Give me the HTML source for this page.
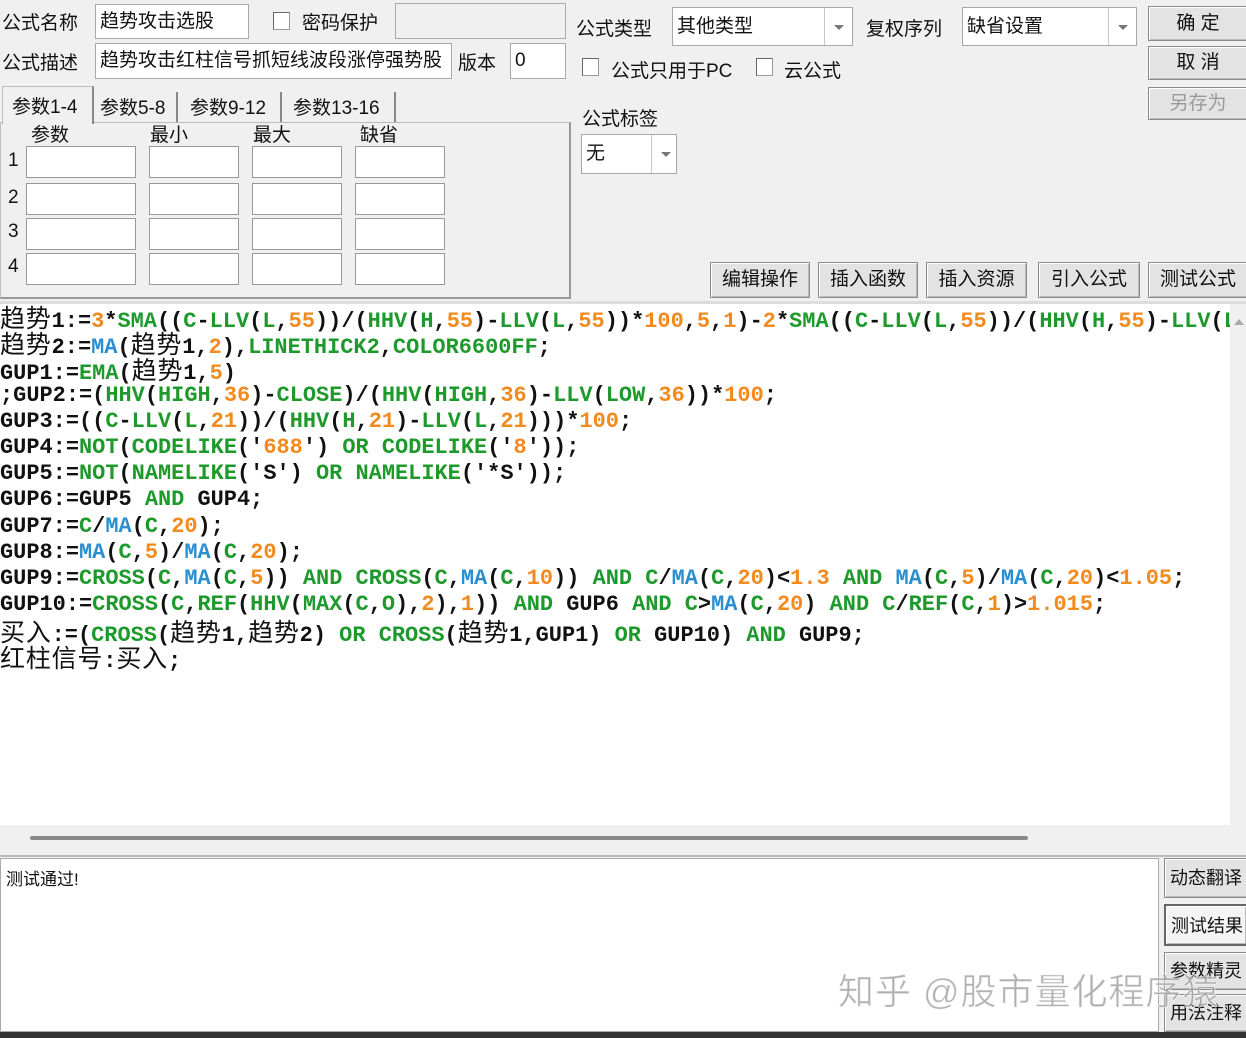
<!DOCTYPE html>
<html><head><meta charset="utf-8"><style>
*{margin:0;padding:0;box-sizing:border-box}
body{width:1246px;height:1038px;background:#f0f0f0;position:relative;overflow:hidden;font-family:"Liberation Sans","Noto Sans CJK SC",sans-serif;color:#111}
.a{position:absolute}
.lbl{position:absolute;font-size:19px;white-space:nowrap}
.in{position:absolute;background:#fff;border:1px solid #a8a8a8;font-size:19px;padding-left:4px;white-space:nowrap;overflow:hidden}
.cb{position:absolute;width:17px;height:18px;background:#fff;border:1px solid #999;border-top-color:#666;border-left-color:#666}
.btn{position:absolute;background:#e3e3e3;border:1px solid #8a8a8a;box-shadow:inset 1px 1px 0 #fff,inset -1px -1px 0 #bbb;font-size:19px;text-align:center;white-space:nowrap}
.arr{position:absolute;top:0;right:0;bottom:0;width:28px;border-left:1px solid #c8c8c8}
.arr:after{content:"";position:absolute;left:9px;top:50%;margin-top:-2px;border:5px solid transparent;border-top:5px solid #777}
#code{position:absolute;left:0;top:304px;width:1230px;height:521px;background:#fff;overflow:hidden}
#code div{height:26.2px;line-height:26px;font-family:"Liberation Mono",monospace;font-weight:bold;font-size:21.95px;white-space:pre;color:#111}
.g{color:#1e9a2c}.b{color:#2a8fd0}.o{color:#f28a1e}
.z{font-family:"Noto Sans CJK SC",sans-serif;font-weight:normal;font-size:25px;letter-spacing:0.8px}
.pn{position:absolute;font-size:19px}
</style></head><body>
<div class="lbl" style="left:2px;top:8px">公式名称</div>
<div class="in" style="left:95px;top:4px;width:154px;height:35px;line-height:33px">趋势攻击选股</div>
<div class="cb" style="left:273px;top:12px"></div>
<div class="lbl" style="left:302px;top:8px">密码保护</div>
<div class="a" style="left:395px;top:3px;width:171px;height:36px;border:1px solid #aaa;background:#f0f0f0"></div>
<div class="lbl" style="left:2px;top:48px">公式描述</div>
<div class="in" style="left:95px;top:43px;width:357px;height:36px;line-height:34px">趋势攻击红柱信号抓短线波段涨停强势股</div>
<div class="lbl" style="left:458px;top:48px">版本</div>
<div class="in" style="left:510px;top:43px;width:56px;height:36px;line-height:34px">0</div>

<div class="a" style="left:0;top:122px;width:571px;height:177px;border:1px solid #bbb;border-right:2px solid #999;border-bottom:2px solid #999"></div>
<div class="a" style="left:2px;top:86px;width:92px;height:38px;background:#f0f0f0;border:1px solid #bbb;border-bottom:none;border-right:2px solid #888;font-size:19px;padding:5px 0 0 9px">参数1-4</div>
<div class="a" style="left:96px;top:92px;width:82px;height:30px;border-right:2px solid #888;font-size:19px;padding:1px 0 0 4px">参数5-8</div>
<div class="a" style="left:182px;top:92px;width:100px;height:30px;border-right:2px solid #888;font-size:19px;padding:1px 0 0 8px">参数9-12</div>
<div class="a" style="left:286px;top:92px;width:110px;height:30px;border-right:2px solid #888;font-size:19px;padding:1px 0 0 7px">参数13-16</div>
<div class="pn" style="left:31px;top:120px">参数</div>
<div class="pn" style="left:150px;top:120px">最小</div>
<div class="pn" style="left:253px;top:120px">最大</div>
<div class="pn" style="left:360px;top:120px">缺省</div>
<div class="pn" style="left:8px;top:150px">1</div>
<div class="pn" style="left:8px;top:187px">2</div>
<div class="pn" style="left:8px;top:221px">3</div>
<div class="pn" style="left:8px;top:256px">4</div>
<div id="grid"></div>

<div class="lbl" style="left:576px;top:14px">公式类型</div>
<div class="in" style="left:672px;top:7px;width:181px;height:39px;line-height:37px">其他类型<div class="arr"></div></div>
<div class="lbl" style="left:866px;top:14px">复权序列</div>
<div class="in" style="left:962px;top:7px;width:175px;height:39px;line-height:37px">缺省设置<div class="arr"></div></div>
<div class="btn" style="left:1148px;top:6px;width:100px;height:35px;line-height:33px">确 定</div>
<div class="btn" style="left:1148px;top:46px;width:100px;height:34px;line-height:32px">取 消</div>
<div class="btn" style="left:1148px;top:87px;width:100px;height:33px;line-height:31px;color:#999">另存为</div>
<div class="cb" style="left:582px;top:58px"></div>
<div class="lbl" style="left:611px;top:56px">公式只用于PC</div>
<div class="cb" style="left:756px;top:58px"></div>
<div class="lbl" style="left:784px;top:56px">云公式</div>
<div class="lbl" style="left:582px;top:104px">公式标签</div>
<div class="in" style="left:581px;top:134px;width:96px;height:40px;line-height:38px">无<div class="arr" style="width:25px"></div></div>
<div class="btn" style="left:710px;top:262px;width:100px;height:36px;line-height:34px">编辑操作</div>
<div class="btn" style="left:818px;top:262px;width:100px;height:36px;line-height:34px">插入函数</div>
<div class="btn" style="left:926px;top:262px;width:101px;height:36px;line-height:34px">插入资源</div>
<div class="btn" style="left:1038px;top:262px;width:102px;height:36px;line-height:34px">引入公式</div>
<div class="btn" style="left:1148px;top:262px;width:100px;height:36px;line-height:34px">测试公式</div>

<div class="a" style="left:0;top:301px;width:1246px;height:3px;background:#ddd"></div>
<div id="code">
<div><span class="z">趋势</span>1:=<span class="o">3</span>*<span class="g">SMA</span>((<span class="g">C</span>-<span class="g">LLV</span>(<span class="g">L</span>,<span class="o">55</span>))/(<span class="g">HHV</span>(<span class="g">H</span>,<span class="o">55</span>)-<span class="g">LLV</span>(<span class="g">L</span>,<span class="o">55</span>))*<span class="o">100</span>,<span class="o">5</span>,<span class="o">1</span>)-<span class="o">2</span>*<span class="g">SMA</span>((<span class="g">C</span>-<span class="g">LLV</span>(<span class="g">L</span>,<span class="o">55</span>))/(<span class="g">HHV</span>(<span class="g">H</span>,<span class="o">55</span>)-<span class="g">LLV</span>(<span class="g">L</span></div>
<div><span class="z">趋势</span>2:=<span class="b">MA</span>(<span class="z">趋势</span>1,<span class="o">2</span>),<span class="g">LINETHICK2</span>,<span class="g">COLOR6600FF</span>;</div>
<div>GUP1:=<span class="g">EMA</span>(<span class="z">趋势</span>1,<span class="o">5</span>)</div>
<div>;GUP2:=(<span class="g">HHV</span>(<span class="g">HIGH</span>,<span class="o">36</span>)-<span class="g">CLOSE</span>)/(<span class="g">HHV</span>(<span class="g">HIGH</span>,<span class="o">36</span>)-<span class="g">LLV</span>(<span class="g">LOW</span>,<span class="o">36</span>))*<span class="o">100</span>;</div>
<div>GUP3:=((<span class="g">C</span>-<span class="g">LLV</span>(<span class="g">L</span>,<span class="o">21</span>))/(<span class="g">HHV</span>(<span class="g">H</span>,<span class="o">21</span>)-<span class="g">LLV</span>(<span class="g">L</span>,<span class="o">21</span>)))*<span class="o">100</span>;</div>
<div>GUP4:=<span class="g">NOT</span>(<span class="g">CODELIKE</span>('<span class="o">688</span>') <span class="g">OR</span> <span class="g">CODELIKE</span>('<span class="o">8</span>'));</div>
<div>GUP5:=<span class="g">NOT</span>(<span class="g">NAMELIKE</span>('S') <span class="g">OR</span> <span class="g">NAMELIKE</span>('*S'));</div>
<div>GUP6:=GUP5 <span class="g">AND</span> GUP4;</div>
<div>GUP7:=<span class="g">C</span>/<span class="b">MA</span>(<span class="g">C</span>,<span class="o">20</span>);</div>
<div>GUP8:=<span class="b">MA</span>(<span class="g">C</span>,<span class="o">5</span>)/<span class="b">MA</span>(<span class="g">C</span>,<span class="o">20</span>);</div>
<div>GUP9:=<span class="g">CROSS</span>(<span class="g">C</span>,<span class="b">MA</span>(<span class="g">C</span>,<span class="o">5</span>)) <span class="g">AND</span> <span class="g">CROSS</span>(<span class="g">C</span>,<span class="b">MA</span>(<span class="g">C</span>,<span class="o">10</span>)) <span class="g">AND</span> <span class="g">C</span>/<span class="b">MA</span>(<span class="g">C</span>,<span class="o">20</span>)&lt;<span class="o">1.3</span> <span class="g">AND</span> <span class="b">MA</span>(<span class="g">C</span>,<span class="o">5</span>)/<span class="b">MA</span>(<span class="g">C</span>,<span class="o">20</span>)&lt;<span class="o">1.05</span>;</div>
<div>GUP10:=<span class="g">CROSS</span>(<span class="g">C</span>,<span class="g">REF</span>(<span class="g">HHV</span>(<span class="g">MAX</span>(<span class="g">C</span>,<span class="g">O</span>),<span class="o">2</span>),<span class="o">1</span>)) <span class="g">AND</span> GUP6 <span class="g">AND</span> <span class="g">C</span>&gt;<span class="b">MA</span>(<span class="g">C</span>,<span class="o">20</span>) <span class="g">AND</span> <span class="g">C</span>/<span class="g">REF</span>(<span class="g">C</span>,<span class="o">1</span>)&gt;<span class="o">1.015</span>;</div>
<div><span class="z">买入</span>:=(<span class="g">CROSS</span>(<span class="z">趋势</span>1,<span class="z">趋势</span>2) <span class="g">OR</span> <span class="g">CROSS</span>(<span class="z">趋势</span>1,GUP1) <span class="g">OR</span> GUP10) <span class="g">AND</span> GUP9;</div>
<div><span class="z">红柱信号</span>:<span class="z">买入</span>;</div>
</div>
<div class="a" style="left:1230px;top:304px;width:16px;height:521px;background:#f0f0f0"></div>
<div class="a" style="left:1234px;top:314px;border:5px solid transparent;border-bottom:6px solid #aaa"></div>
<div class="a" style="left:0;top:825px;width:1246px;height:30px;background:#f0f0f0"></div>
<div class="a" style="left:30px;top:836px;width:998px;height:4px;background:#888;border-radius:2px"></div>
<div class="a" style="left:0;top:855px;width:1246px;height:2px;background:#bbb"></div>
<div class="a" style="left:0;top:858px;width:1159px;height:174px;background:#fff;border:1px solid #aaa"></div>
<div class="a" style="left:6px;top:865px;font-size:17px">测试通过!</div>
<div class="btn" style="left:1164px;top:858px;width:84px;height:40px;line-height:38px;font-size:18px;text-align:left;padding-left:5px">动态翻译</div>
<div class="btn" style="left:1164px;top:904px;width:84px;height:42px;line-height:40px;font-size:18px;text-align:left;padding-left:5px;border:2px solid #666;background:#f4f4f4">测试结果</div>
<div class="btn" style="left:1164px;top:952px;width:84px;height:38px;line-height:36px;font-size:18px;text-align:left;padding-left:5px">参数精灵</div>
<div class="btn" style="left:1164px;top:994px;width:84px;height:38px;line-height:36px;font-size:18px;text-align:left;padding-left:5px">用法注释</div>
<div class="a" style="left:0;top:1032px;width:1246px;height:6px;background:#333"></div>
<div class="a" style="left:838px;top:963px;font-size:36px;letter-spacing:1px;color:rgba(150,150,150,0.75);white-space:nowrap;-webkit-text-stroke:1px rgba(255,255,255,0.6)">知乎 @股市量化程序猿</div>
<script>
var g=document.getElementById('grid'),xs=[[26,110],[149,90],[252,90],[355,90]],ys=[[146,32],[183,32],[218,32],[253,32]],h='';
ys.forEach(function(y){xs.forEach(function(x){h+='<div class="a" style="left:'+x[0]+'px;top:'+y[0]+'px;width:'+x[1]+'px;height:'+y[1]+'px;background:#fff;border:1px solid #999"></div>'})});
g.innerHTML=h;
</script>
</body></html>
